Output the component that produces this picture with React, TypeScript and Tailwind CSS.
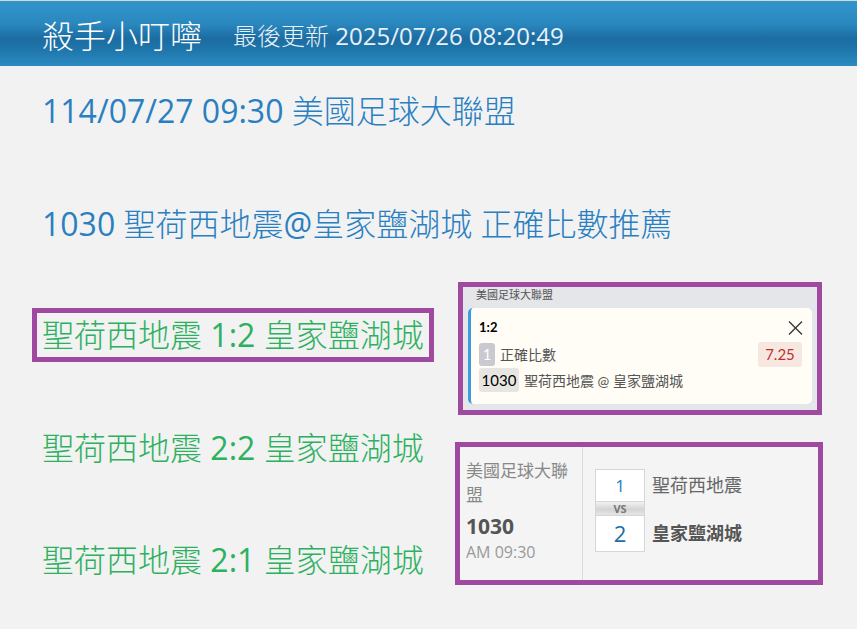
import React from "react";

const font = "font-['Open_Sans','Noto_Sans_CJK_TC',sans-serif]";

// CJK runs get the light cut so they look like the thin Chinese UI font; Latin stays regular
const T: React.FC<{ children: string }> = ({ children }) => (
  <>
    {children.split(/([\u3000-\u9fff]+)/).map((part, i) =>
      /[\u3000-\u9fff]/.test(part) ? (
        <span key={i} className="font-light">
          {part}
        </span>
      ) : (
        part
      )
    )}
  </>
);

const GreenLine: React.FC<{ text: string; boxed?: boolean; className?: string }> = ({ text, boxed, className }) => (
  <div
    className={`inline-block border-[5px] px-[5px] text-[32px] leading-[44px] whitespace-nowrap text-[#2db160] ${
      boxed ? "border-[#9f49a1]" : "border-transparent"
    } ${className ?? ""}`}
  >
    <T>{text}</T>
  </div>
);

const BetSlip: React.FC = () => (
  <div className="ml-[3px] w-[364px] border-[5px] border-[#9f49a1] bg-[#e5e6e9]">
    <div className="h-[21px] pl-[13px] text-[11px] leading-[15px] text-[#555]">美國足球大聯盟</div>
    <div className="mx-[5px] mb-[6px] rounded-[5px] border-l-[3px] border-[#3a9de0] bg-[#fffdf5] pl-[8px] pr-[10px] pt-[11px] pb-[12px] font-['Lato','Noto_Sans_CJK_TC',sans-serif]">
      <div className="flex h-[18px] items-center justify-between">
        <span className="text-[13px] font-bold text-black">1:2</span>
        <svg width="15" height="14" viewBox="0 0 15 14" className="mr-[-1px]">
          <path d="M1 0.5 L14 13.5 M14 0.5 L1 13.5" stroke="#333" strokeWidth="1.3" fill="none" />
        </svg>
      </div>
      <div className="mt-[5px] flex h-[25px] items-center justify-between">
        <div className="flex items-center gap-[5px]">
          <span className="flex h-[23px] w-[16px] items-center justify-center rounded-[3px] bg-[#c9c9d1] text-[15px] text-white">1</span>
          <span className="text-[14px] text-[#555]">正確比數</span>
        </div>
        <span className="flex h-[25px] w-[44px] items-center justify-center rounded-[3px] bg-[#f7e7e1] text-[15px] text-[#c0302a]">7.25</span>
      </div>
      <div className="mt-[1px] flex h-[24px] items-center gap-[5px]">
        <span className="flex h-[24px] w-[40px] items-center justify-center rounded-[3px] bg-[#e7e5e1] text-[15px] text-black">1030</span>
        <span className="text-[14px] text-[#555]">聖荷西地震 @ 皇家鹽湖城</span>
      </div>
    </div>
  </div>
);

const MatchCard: React.FC = () => (
  <div className={`flex h-[143px] w-[368px] border-[5px] border-[#9f49a1] bg-[#f4f4f4] ${font}`}>
    <div className="w-[123px] border-r border-[#d9d9d9] px-[6px] pt-[12px]">
      <div className="text-[17px] leading-[24px] text-[#888]">美國足球大聯盟</div>
      <div className="mt-[5px] text-[21px] font-bold leading-[28px] text-[#555]">1030</div>
      <div className="mt-[2px] text-[16px] leading-[20px] text-[#999]">AM 09:30</div>
    </div>
    <div className="flex flex-col pl-[12px] pt-[22px]">
      <div className="flex items-center gap-[7px]">
        <div className="flex h-[33px] w-[50px] items-center justify-center border border-[#d6d6d6] bg-white text-[17px] text-[#2280c0]">1</div>
        <span className="text-[18px] text-[#666]">聖荷西地震</span>
      </div>
      <div className="flex h-[13px] w-[50px] items-center justify-center border-x border-[#d6d6d6] bg-[linear-gradient(#f2f2f2,#d4d4d4_55%,#e6e6e6)] text-[11px] font-bold leading-none text-[#777]">
        VS
      </div>
      <div className="flex items-center gap-[7px]">
        <div className="flex h-[37px] w-[50px] items-center justify-center border border-[#d6d6d6] bg-white text-[22px] text-[#1a6ea6]">2</div>
        <span className="text-[18px] font-bold text-[#555]">皇家鹽湖城</span>
      </div>
    </div>
  </div>
);

export default function App() {
  return (
    <div className={`min-h-screen bg-[#f2f2f2] ${font}`}>
      <header className="flex h-[66px] items-center border-t border-[#d8d8d8] bg-[linear-gradient(#3095cb_0%,#2a88bf_35%,#1b6ca1_58%,#1f76ab_75%,#2b8bc2_100%)] px-[42px] pt-[4px] text-white">
        <h1 className="text-[32px] leading-[40px] whitespace-nowrap">
          <T>殺手小叮嚀</T>
        </h1>
        <span className="ml-[31px] text-[24px] leading-[40px] whitespace-nowrap text-[#e8f1f8]">
          <T>最後更新 2025/07/26 08:20:49</T>
        </span>
      </header>
      <main className="px-[32px] pt-[25px]">
        <div className="pl-[10px] text-[32px] leading-[40px] whitespace-nowrap text-[#2a7fc1]">
          <T>114/07/27 09:30 美國足球大聯盟</T>
        </div>
        <div className="mt-[73px] pl-[10px] text-[32px] leading-[40px] whitespace-nowrap text-[#2a7fc1]">
          <T>1030 聖荷西地震@皇家鹽湖城 正確比數推薦</T>
        </div>
        <div className="mt-[38px] flex">
          <div className="flex w-[423px] flex-col items-start pt-[26px]">
            <GreenLine text="聖荷西地震 1:2 皇家鹽湖城" boxed />
            <GreenLine text="聖荷西地震 2:2 皇家鹽湖城" className="mt-[59px]" />
            <GreenLine text="聖荷西地震 2:1 皇家鹽湖城" className="mt-[58px]" />
          </div>
          <div className="flex flex-col">
            <BetSlip />
            <div className="mt-[27px]">
              <MatchCard />
            </div>
          </div>
        </div>
      </main>
    </div>
  );
}
